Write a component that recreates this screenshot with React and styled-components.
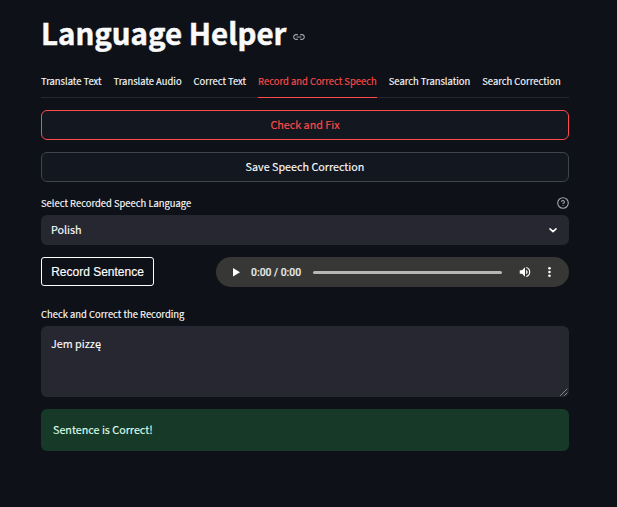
import React from 'react';
import styled, { createGlobalStyle } from 'styled-components';

const GlobalStyle = createGlobalStyle`
  * { box-sizing: border-box; }
  body {
    margin: 0;
    background: #0e1117;
    color: #fafafa;
    font-family: "Noto Sans CJK SC", "Noto Sans", sans-serif;
    font-size: 10.75px;
    -webkit-text-stroke: 0.15px currentColor;
    overflow: hidden;
  }
`;

const Page = styled.main`
  width: 617px;
  height: 507px;
  padding: 10px 48px 0 41px;
  display: flex;
  flex-direction: column;
`;

const Header = styled.header`
  height: 44px;
  display: flex;
  align-items: center;
  gap: 6px;
`;

const Title = styled.h1`
  margin: 0;
  font-size: 29.45px;
  line-height: 44px;
  font-weight: 700;
  -webkit-text-stroke: 0.5px currentColor;
  white-space: nowrap;
`;

const LinkIcon = styled.svg`
  width: 14px;
  height: 14px;
  margin-top: 10px;
`;

const Tabs = styled.nav`
  height: 30px;
  margin: 14px 0 12px;
  display: flex;
  gap: 12px;
  border-bottom: 1px solid #262730;
`;

const Tab = styled.a`
  height: 30px;
  line-height: 27px;
  font-size: 9.42px;
  white-space: nowrap;
  color: ${(p) => (p.$active ? '#ff4b4b' : '#fafafa')};
  border-bottom: 1px solid ${(p) => (p.$active ? '#ff4b4b' : 'transparent')};
`;

const Button = styled.button`
  height: 30px;
  margin: 0 0 12px;
  padding: 0;
  font: inherit;
  line-height: 28px;
  border-radius: 6px;
  background: #131720;
  color: ${(p) => (p.$primary ? '#ff4b4b' : '#fafafa')};
  border: 1px solid ${(p) => (p.$primary ? '#ff4b4b' : '#41444c')};
`;

const LabelRow = styled.div`
  height: 18px;
  margin-bottom: 3px;
  display: flex;
  align-items: center;
  justify-content: space-between;
  font-size: 9.42px;
  line-height: 18px;
`;

const HelpIcon = styled.svg`
  width: 12px;
  height: 12px;
`;

const Select = styled.div`
  height: 30px;
  padding: 0 10px;
  border-radius: 6px;
  background: #262730;
  display: flex;
  align-items: center;
  justify-content: space-between;
  line-height: 18px;
`;

const Chevron = styled.svg`
  width: 12px;
  height: 12px;
`;

const RecorderRow = styled.div`
  height: 30px;
  margin: 12px 0 18px;
  display: flex;
  justify-content: space-between;
  align-items: flex-start;
`;

const RecordButton = styled.button`
  width: 113px;
  height: 29px;
  padding: 1px 0 0;
  border: 1px solid #fff;
  border-radius: 3px;
  background: transparent;
  color: #fff;
  font: 12px "Liberation Sans", Arial, sans-serif;
  line-height: 27px;
`;

const Player = styled.div`
  width: 353px;
  height: 30px;
  padding: 0 13px 0 14px;
  border-radius: 15px;
  background: #373836;
  display: flex;
  align-items: center;
`;

const PlayerIcon = styled.svg`
  width: 14px;
  height: 14px;
  margin-left: ${(p) => p.$gap || 0}px;
  flex: none;
  fill: #fff;
`;

const Time = styled.span`
  width: 51px;
  margin-left: 7px;
  font: 500 10.4px Roboto, sans-serif;
  color: #ececec;
  white-space: nowrap;
`;

const Track = styled.div`
  width: 190px;
  height: 3px;
  margin-left: 11px;
  border-radius: 2px;
  background: #b6b6b5;
`;

const TextArea = styled.div`
  height: 71px;
  padding: 9px 10px;
  border-radius: 6px;
  background: #262730;
  line-height: 18px;
  position: relative;
`;

const Grip = styled.svg`
  position: absolute;
  right: 1px;
  bottom: 1px;
  width: 8px;
  height: 8px;
`;

const Alert = styled.div`
  height: 42px;
  margin-top: 12px;
  padding: 0 12px;
  border-radius: 6px;
  background: #173928;
  color: #dffde9;
  line-height: 42px;
`;

const TABS = [
  'Translate Text',
  'Translate Audio',
  'Correct Text',
  'Record and Correct Speech',
  'Search Translation',
  'Search Correction',
];

export default function App() {
  return (
    <>
      <GlobalStyle />
      <Page>
        <Header>
          <Title>Language Helper</Title>
          <LinkIcon viewBox="0 0 24 24" fill="#a3a5a8">
            <path d="M3.9 12c0-1.71 1.39-3.1 3.1-3.1h3V7H7c-2.76 0-5 2.24-5 5s2.24 5 5 5h3v-1.9H7c-1.71 0-3.1-1.39-3.1-3.1zM8 13h8v-2H8v2zm9-6h-3v1.9h3c1.71 0 3.1 1.39 3.1 3.1s-1.39 3.1-3.1 3.1h-3V17h3c2.76 0 5-2.24 5-5s-2.24-5-5-5z" />
          </LinkIcon>
        </Header>
        <Tabs>
          {TABS.map((name) => (
            <Tab key={name} $active={name === 'Record and Correct Speech'}>{name}</Tab>
          ))}
        </Tabs>
        <Button $primary>Check and Fix</Button>
        <Button>Save Speech Correction</Button>
        <LabelRow>
          <span>Select Recorded Speech Language</span>
          <HelpIcon viewBox="0 0 24 24" fill="none" stroke="#a3a5a8" strokeWidth="2.2" strokeLinecap="round">
            <circle cx="12" cy="12" r="10.6" />
            <path d="M9.1 9a3 3 0 0 1 5.8 1c0 2-2.9 3-2.9 3M12 17h.01" />
          </HelpIcon>
        </LabelRow>
        <Select>
          <span>Polish</span>
          <Chevron viewBox="0 0 12 12" fill="none" stroke="#fafafa" strokeWidth="1.6" strokeLinecap="round" strokeLinejoin="round">
            <path d="M3 4.8 6 7.7 9 4.8" />
          </Chevron>
        </Select>
        <RecorderRow>
          <RecordButton>Record Sentence</RecordButton>
          <Player>
            <PlayerIcon viewBox="0 0 14 14"><path d="M3 3v8.4L10 7.2z" /></PlayerIcon>
            <Time>0:00 / 0:00</Time>
            <Track />
            <PlayerIcon $gap={16} viewBox="0 0 24 24">
              <path d="M3 9v6h4l5 5V4L7 9H3zm13.5 3A4.5 4.5 0 0 0 14 7.97v8.05A4.5 4.5 0 0 0 16.5 12zM14 3.23v2.06a7 7 0 0 1 0 13.42v2.06a9 9 0 0 0 0-17.54z" />
            </PlayerIcon>
            <PlayerIcon $gap={10} viewBox="0 0 24 24">
              <circle cx="12.8" cy="5.5" r="2.2" /><circle cx="12.8" cy="12" r="2.2" /><circle cx="12.8" cy="18.5" r="2.2" />
            </PlayerIcon>
          </Player>
        </RecorderRow>
        <LabelRow><span>Check and Correct the Recording</span></LabelRow>
        <TextArea>
          Jem pizzę
          <Grip viewBox="0 0 8 8" stroke="#c8c8ca" strokeWidth="0.9" strokeDasharray="1 0.4">
            <path d="M.5 7.5l7-7M4.5 7.5l3-3" />
          </Grip>
        </TextArea>
        <Alert>Sentence is Correct!</Alert>
      </Page>
    </>
  );
}
